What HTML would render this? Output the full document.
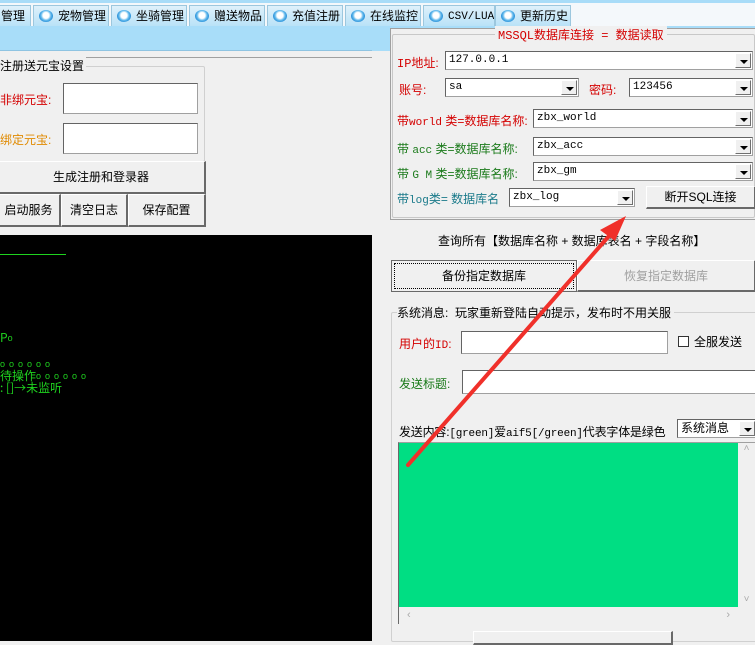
<!DOCTYPE html>
<html><head><meta charset="utf-8"><style>
*{margin:0;padding:0;box-sizing:border-box}
body{width:755px;height:641px;overflow:hidden;background:#f0f0f0;position:relative;font-family:"Liberation Sans","Noto Sans CJK SC",sans-serif;font-size:12px;color:#000}
.a{position:absolute}
.tab{position:absolute;top:5px;height:21px;background:linear-gradient(#dff1fb,#b9e2f7);border:1px solid #9cc7de;border-bottom:none;font-size:12px;line-height:20px;padding-left:24px;white-space:nowrap;overflow:hidden}
.tab i{position:absolute;left:5px;top:4px;width:14px;height:12px;border-radius:50%;background:radial-gradient(circle at 50% 45%,#fff 0 3px,#5fb8ec 5px,#2a8fd8 7px)}
.inp{position:absolute;background:#fff;border:1px solid #a0a0a0;border-top-color:#646464;border-left-color:#646464;font-family:"Liberation Mono","Noto Sans CJK SC",monospace;font-size:11px;padding-left:3px;line-height:16px}
.dd{position:absolute;right:1px;top:1px;bottom:1px;width:16px;background:#f0f0f0;border:1px solid #fff;border-right-color:#707070;border-bottom-color:#707070}
.dd:after{content:"";position:absolute;left:4px;top:6px;border:4px solid transparent;border-top:4px solid #000;border-bottom:none}
.btn{position:absolute;background:#f0f0f0;border:1px solid #fff;border-right:2px solid #696969;border-bottom:2px solid #696969;text-align:center;font-size:12px}
.grp{position:absolute;border:1px solid #d0d0d0;border-radius:2px}
.lbl{position:absolute;font-size:12px;white-space:nowrap}
.mono{font-family:"Liberation Mono","Noto Sans CJK SC",monospace}
.g{color:#1fd31f;font-family:"Noto Sans CJK SC",sans-serif;font-size:12px;line-height:12px;position:absolute;white-space:nowrap}
.o{font-family:"Liberation Sans",sans-serif;font-size:9px;letter-spacing:4px;vertical-align:1px}
</style></head><body>
<div class="a" style="left:0;top:0;width:755px;height:27px;background:#f4f8fb;border-top:3px solid #a8dcf8"></div>
<div class="tab" style="left:-5px;padding-left:5px;width:36px">管理</div>
<div class="tab" style="left:33px;width:76px"><i></i>宠物管理</div>
<div class="tab" style="left:111px;width:76px"><i></i>坐骑管理</div>
<div class="tab" style="left:189px;width:76px"><i></i>赠送物品</div>
<div class="tab" style="left:267px;width:76px"><i></i>充值注册</div>
<div class="tab" style="left:345px;width:76px"><i></i>在线监控</div>
<div class="tab" style="left:423px;width:72px;font-size:11px"><i></i><span class="mono">CSV/LUA</span></div>
<div class="tab" style="left:495px;width:76px"><i></i>更新历史</div>
<div class="a" style="left:0;top:26px;width:755px;height:25px;background:#a8ddf9;border-bottom:1px solid #8fc4e2"></div>
<div class="a" style="left:0;top:57px;width:372px;height:584px;background:#f0f0f0;border-top:1px solid #a0a0a0"></div>
<div class="grp" style="left:-5px;top:66px;width:210px;height:96px"></div>
<div class="lbl" style="left:0;top:57px;background:#f0f0f0;padding-right:2px">注册送元宝设置</div>
<div class="lbl" style="left:0;top:91px;color:#d40000">非绑元宝:</div>
<div class="inp" style="left:63px;top:83px;width:135px;height:31px"></div>
<div class="lbl" style="left:0;top:131px;color:#e08a00">绑定元宝:</div>
<div class="inp" style="left:63px;top:123px;width:135px;height:31px"></div>
<div class="btn" style="left:-3px;top:161px;width:209px;height:33px;line-height:31px">生成注册和登录器</div>
<div class="btn" style="left:-3px;top:194px;width:64px;height:33px;line-height:31px">启动服务</div>
<div class="btn" style="left:61px;top:194px;width:67px;height:33px;line-height:31px">清空日志</div>
<div class="btn" style="left:128px;top:194px;width:78px;height:33px;line-height:31px">保存配置</div>
<div class="a" style="left:0;top:235px;width:372px;height:406px;background:#000"></div>
<div class="a" style="left:0;top:254px;width:66px;height:1px;background:#1fd31f"></div>
<div class="g" style="left:0;top:332px">P<span class="o">o</span></div>
<div class="g" style="left:0;top:358px"><span class="o">oooooo</span></div>
<div class="g" style="left:0;top:370px">待操作<span class="o">oooooo</span></div>
<div class="g" style="left:0;top:382px">: []→未监听</div>
<div class="a" style="left:372px;top:51px;width:383px;height:590px;background:#f0f0f0"></div>
<div class="a" style="left:372px;top:28px;width:18px;height:23px;background:#a8ddf9"></div>
<div class="a" style="left:390px;top:28px;width:365px;height:192px;background:#f0f0f0;border:1px solid #a0a0a0;border-right:none"></div>
<div class="grp" style="left:392px;top:34px;width:363px;height:184px;border-color:#c8c8c8"></div>
<div class="lbl mono" style="left:495px;top:26px;color:#d40000;background:#f0f0f0;padding:0 3px">MSSQL数据库连接 = 数据读取</div>
<div class="lbl" style="left:397px;top:54px;color:#d40000"><span class="mono">IP</span>地址:</div>
<div class="inp" style="left:445px;top:51px;width:308px;height:19px">127.0.0.1<span class="dd"></span></div>
<div class="lbl" style="left:399px;top:81px;color:#d40000">账号:</div>
<div class="inp" style="left:445px;top:78px;width:134px;height:19px">sa<span class="dd"></span></div>
<div class="lbl" style="left:589px;top:81px;color:#d40000">密码:</div>
<div class="inp" style="left:629px;top:78px;width:124px;height:19px">123456<span class="dd"></span></div>
<div class="lbl" style="left:397px;top:112px;color:#d40000">带<span class="mono" style="font-size:11px">world</span> 类=数据库名称:</div>
<div class="inp" style="left:533px;top:109px;width:220px;height:19px">zbx_world<span class="dd"></span></div>
<div class="lbl" style="left:397px;top:140px;color:#1a7a1a">带 <span class="mono" style="font-size:11px">acc</span>  类=数据库名称:</div>
<div class="inp" style="left:533px;top:137px;width:220px;height:19px">zbx_acc<span class="dd"></span></div>
<div class="lbl" style="left:397px;top:165px;color:#1a7a1a">带 <span class="mono" style="font-size:11px">G M</span>  类=数据库名称:</div>
<div class="inp" style="left:533px;top:162px;width:220px;height:19px">zbx_gm<span class="dd"></span></div>
<div class="lbl" style="left:397px;top:190px;color:#1a7a8a">带<span class="mono" style="font-size:11px">log</span>类= 数据库名</div>
<div class="inp" style="left:509px;top:188px;width:126px;height:19px">zbx_log<span class="dd"></span></div>
<div class="btn" style="left:646px;top:186px;width:110px;height:23px;line-height:21px">断开SQL连接</div>
<div class="lbl" style="left:438px;top:232px">查询所有【数据库名称 + 数据库表名 + 字段名称】</div>
<div class="btn" style="left:391px;top:260px;width:186px;height:32px;line-height:30px;border:1px solid #696969;outline:1px dotted #000;outline-offset:-4px">备份指定数据库</div>
<div class="btn" style="left:577px;top:260px;width:179px;height:32px;line-height:30px;color:#a0a0a0">恢复指定数据库</div>
<div class="grp" style="left:391px;top:312px;width:366px;height:330px"></div>
<div class="lbl" style="left:397px;top:304px;background:#f0f0f0;padding-right:3px">系统消息: &nbsp;玩家重新登陆自动提示，发布时不用关服</div>
<div class="lbl" style="left:399px;top:335px;color:#d40000">用户的<span class="mono" style="font-size:11px">ID</span>:</div>
<div class="inp" style="left:461px;top:331px;width:207px;height:23px"></div>
<div class="a" style="left:678px;top:336px;width:11px;height:11px;border:1px solid #333;background:#fff"></div>
<div class="lbl" style="left:694px;top:333px">全服发送</div>
<div class="lbl" style="left:399px;top:375px;color:#1a7a1a">发送标题:</div>
<div class="inp" style="left:462px;top:370px;width:295px;height:24px"></div>
<div class="lbl" style="left:399px;top:423px;letter-spacing:-0.2px">发送内容:<span class="mono" style="font-size:11px">[green]</span>爱<span class="mono" style="font-size:11px">aif5[/green]</span>代表字体是绿色</div>
<div class="inp" style="left:677px;top:419px;width:80px;height:19px;font-family:'Liberation Sans','Noto Sans CJK SC',sans-serif;font-size:12px">系统消息<span class="dd"></span></div>
<div class="a" style="left:398px;top:442px;width:357px;height:182px;border-left:1px solid #696969;border-top:1px solid #a0a0a0"></div>
<div class="a" style="left:399px;top:443px;width:339px;height:164px;background:#00de83"></div>
<div class="a" style="left:399px;top:607px;width:339px;height:17px;background:#f0f0f0;color:#aaa;font-size:11px;line-height:17px;padding:0 8px">‹<span style="float:right">›</span></div>
<div class="a" style="left:738px;top:443px;width:17px;height:164px;background:#f0f0f0;color:#aaa;font-size:10px;text-align:center">˄<div style="position:absolute;bottom:2px;width:100%">˅</div></div>
<div class="btn" style="left:473px;top:631px;width:200px;height:14px"></div>
<svg class="a" style="left:0;top:0" width="755" height="641"><line x1="408" y1="465" x2="616" y2="228" stroke="#f0302a" stroke-width="4" stroke-linecap="round"/><polygon points="626,216 600,230 615,241" fill="#f0302a"/></svg>
</body></html>
